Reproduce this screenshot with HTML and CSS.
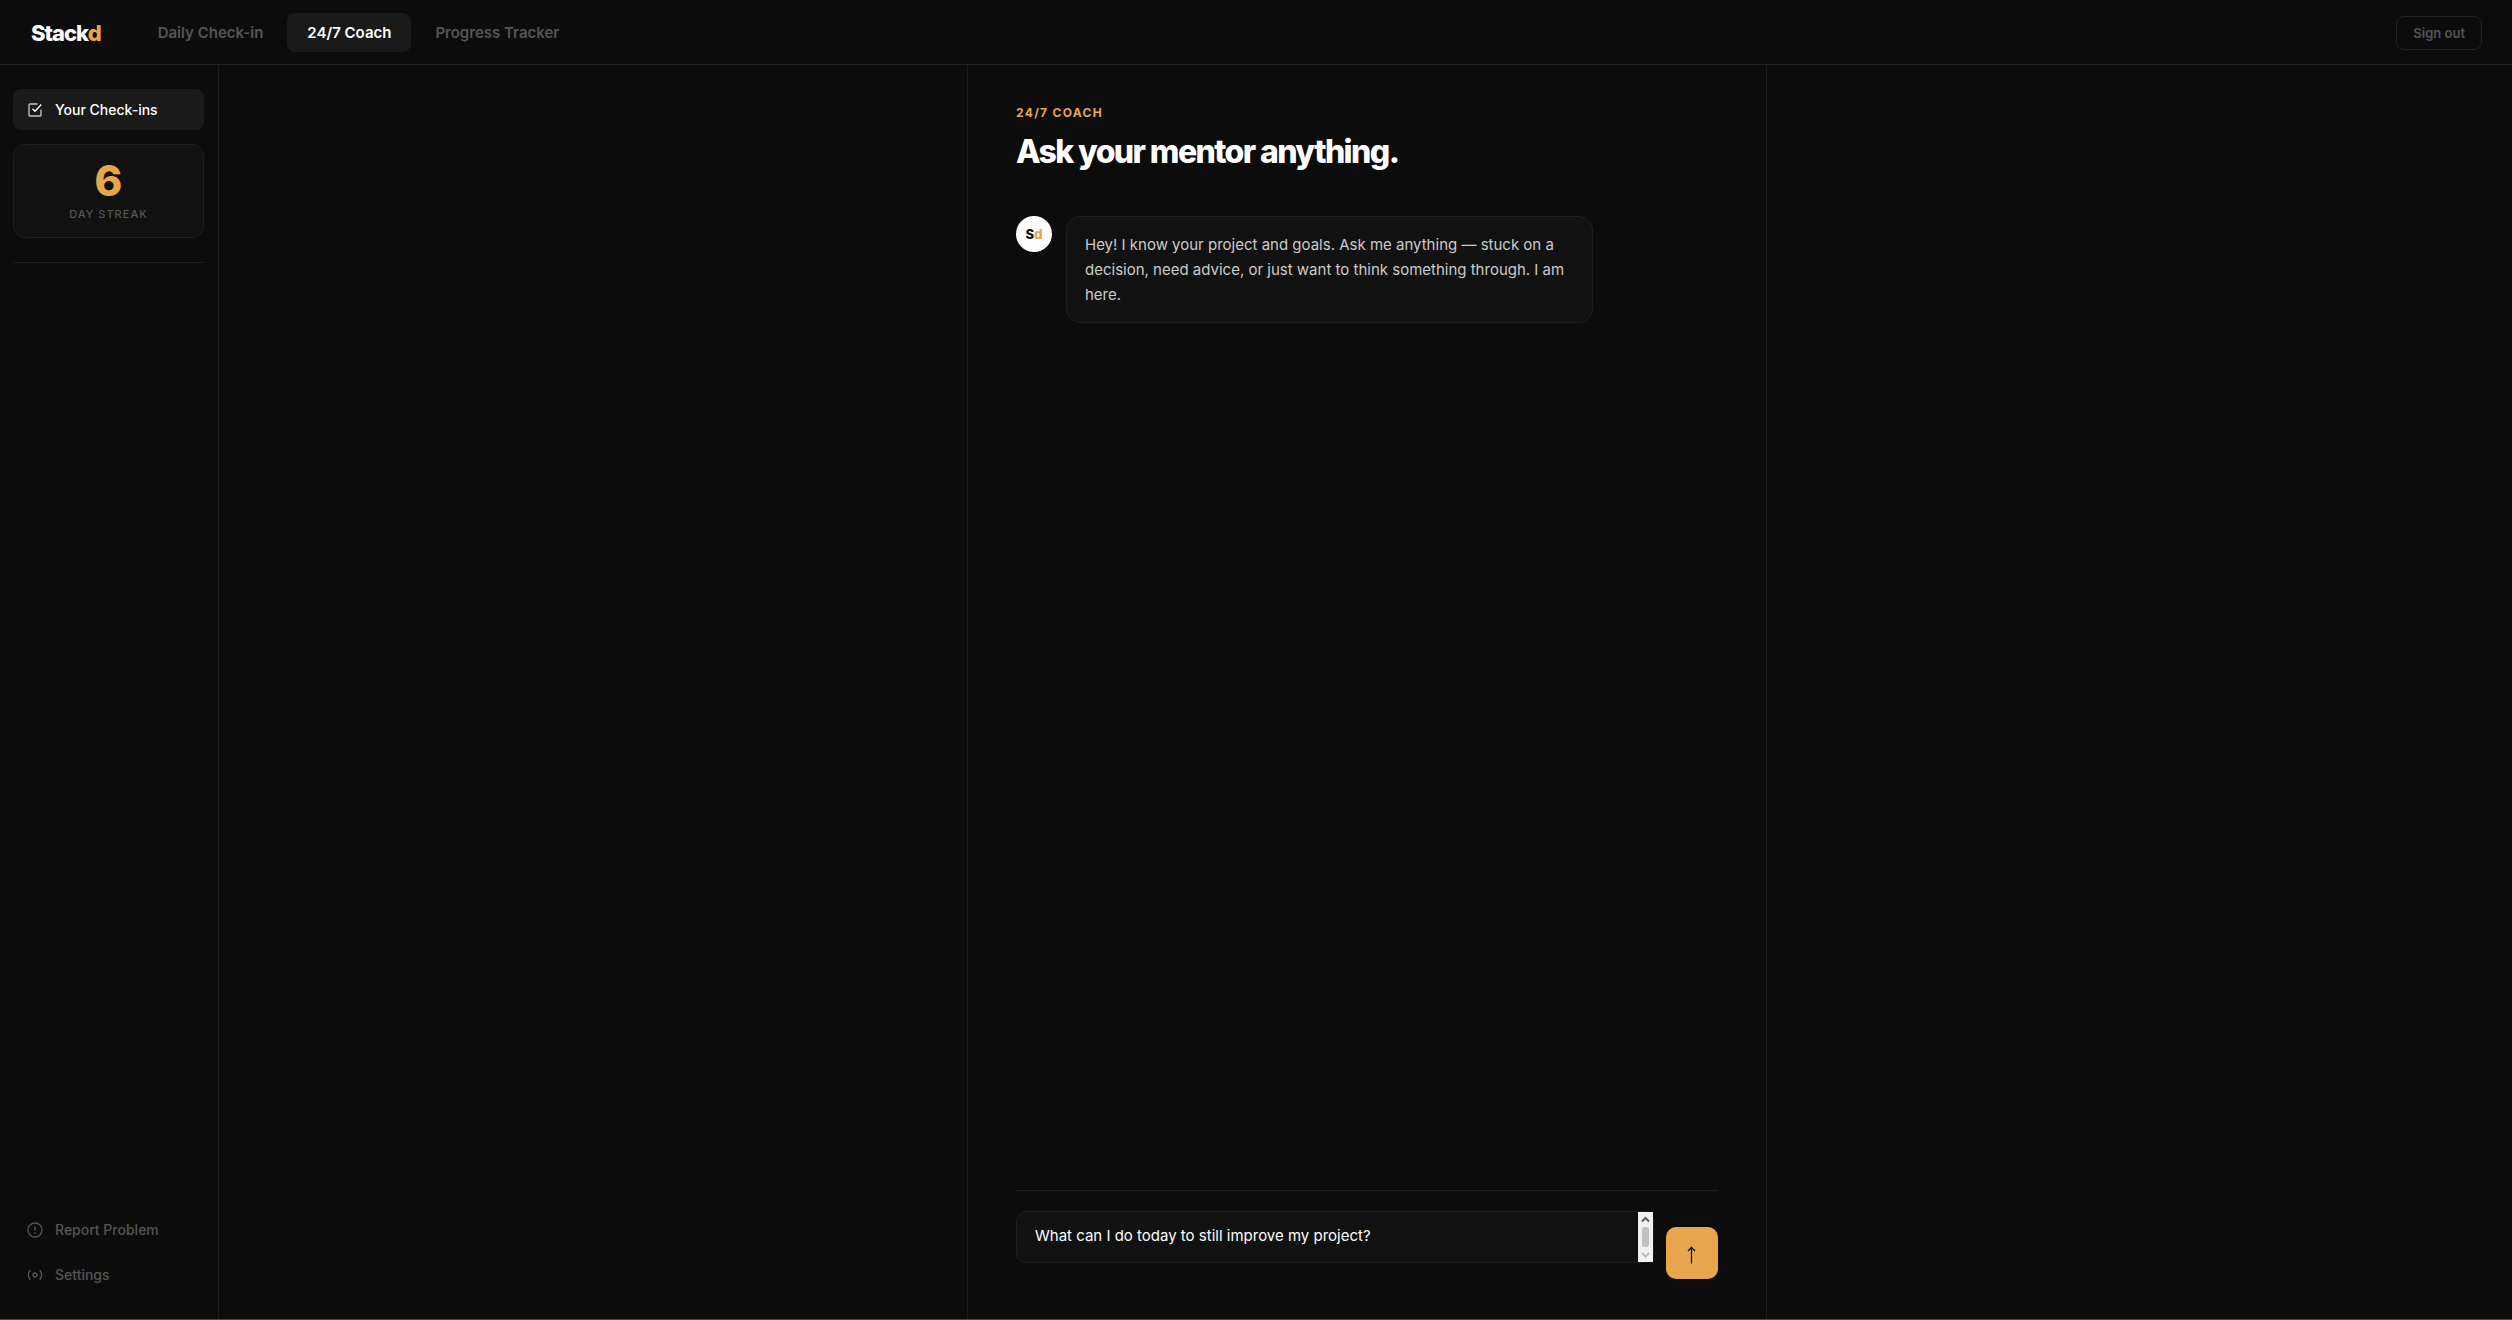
FILE: index.html
```html
<!DOCTYPE html>
<html lang="en">
<head>
    <meta charset="UTF-8">
    <meta name="viewport" content="width=device-width, initial-scale=1.0">
    <title>Stackd - 24/7 Coach</title>
    <link rel="stylesheet" href="styles.css">
</head>
<body>
    <header class="topbar">
        <div class="logo">Stack<span>d</span></div>
        <nav class="tabs">
            <button type="button" class="tab">Daily Check-in</button>
            <button type="button" class="tab active">24/7 Coach</button>
            <button type="button" class="tab">Progress Tracker</button>
        </nav>
        <button type="button" class="signout">Sign out</button>
    </header>

    <div class="layout">
        <aside class="sidebar">
            <button type="button" class="side-item active">
                <svg width="16" height="16" viewBox="0 0 16 16" fill="none" stroke="currentColor" stroke-width="1.300">
                    <path d="M10.500 2H3a1 1 0 0 0-1 1v10a1 1 0 0 0 1 1h10a1 1 0 0 0 1-1V7.500" stroke="#c8c8c8"/>
                    <path d="M5.500 6.700L8 9.200L14.300 2.500"/>
                </svg>
                Your Check-ins
            </button>
            <div class="streak">
                <div class="streak-num">6</div>
                <div class="streak-label">Day streak</div>
            </div>
            <div class="divider"></div>

            <div class="side-bottom">
                <button type="button" class="side-item">
                    <svg width="16" height="16" viewBox="0 0 16 16" fill="none" stroke="currentColor" stroke-width="1.300">
                        <circle cx="8" cy="8" r="7"/>
                        <path d="M8 4.500v4M8 10.300v1.300" stroke-width="1.600"/>
                    </svg>
                    Report Problem
                </button>
                <button type="button" class="side-item">
                    <svg width="16" height="16" viewBox="0 0 24 24" fill="none" stroke="currentColor" stroke-width="2">
                        <circle cx="12" cy="12" r="3"/>
                        <path d="M19.07 4.93a10 10 0 0 1 0 14.14M4.93 4.93a10 10 0 0 0 0 14.14"/>
                    </svg>
                    Settings
                </button>
            </div>
        </aside>

        <main class="main">
            <section class="coach">
                <div class="eyebrow">24/7 Coach</div>
                <h1>Ask your mentor anything.</h1>

                <div class="messages">
                    <div class="message">
                        <div class="avatar">S<span>d</span></div>
                        <div class="bubble">Hey! I know your project and goals. Ask me anything — stuck on a decision, need advice, or just want to think something through. I am here.</div>
                    </div>
                </div>

                <form class="composer">
                    <div class="input-wrap">
                        <textarea class="chat-input" rows="1" aria-label="Message">What can I do today to still improve my project?</textarea>
                        <!-- scrollbar of the message box -->
                        <svg class="scrollbar" width="15" height="50" viewBox="0 0 15 50">
                            <rect width="15" height="50" fill="#f1f1f1"/>
                            <rect x="4" y="15" width="7" height="20" rx="3" fill="#c1c1c1"/>
                            <path d="M4 9.500L7.500 6L11 9.500" fill="none" stroke="#606060" stroke-width="2"/>
                            <path d="M4 41L7.500 44.500L11 41" fill="none" stroke="#bcbcbc" stroke-width="2"/>
                        </svg>
                    </div>
                    <button type="submit" class="send" aria-label="Send">
                        <svg width="20" height="20" viewBox="0 0 20 20" fill="none" stroke="currentColor">
                            <path d="M9.500 20.500V4" stroke-width="1.200"/>
                            <path d="M6 8L9.500 4.500L13 8" stroke-width="1.300"/>
                        </svg>
                    </button>
                </form>
            </section>
        </main>
    </div>
</body>
</html>
```
FILE: styles.css
```css
* {
    box-sizing: border-box;
    margin: 0;
    padding: 0;
}
body {
    min-height: 100vh;
    display: flex;
    flex-direction: column;
    background: #0c0c0c;
    color: #fff;
    font-family: Inter, sans-serif;
    border-bottom: 1px solid #4c4543;
}
button, textarea {
    font-family: inherit;
    border: none;
    background: none;
}
button {
    cursor: pointer;
}

/* top bar */
.topbar {
    display: flex;
    align-items: center;
    height: 65px;
    padding: 1px 30px 0 31px;
    border-bottom: 1px solid #1e1e1e;
}
.logo {
    font-size: 22px;
    font-weight: 800;
    letter-spacing: -1px;
    margin-right: 37px;
}
.logo span, .avatar span {
    color: #e8a54b;
}
.tabs {
    display: flex;
    gap: 4px;
}
.tab {
    padding: 10px 20px;
    border-radius: 8px;
    color: #555;
    font-size: 15px;
    line-height: 19px;
    font-weight: 600;
}
.tab.active {
    background: #1a1a1a;
    color: #fff;
}
.signout {
    margin-left: auto;
    padding: 8px 16px;
    border: 1px solid #222;
    border-radius: 8px;
    color: #555;
    font-size: 13px;
    line-height: 16px;
    font-weight: 600;
}

.layout {
    flex: 1;
    display: flex;
}

/* sidebar */
.sidebar {
    width: 219px;
    display: flex;
    flex-direction: column;
    padding: 24px 14px 24px 13px;
    border-right: 1px solid #1e1e1e;
}
.side-item {
    display: flex;
    align-items: center;
    gap: 12px;
    width: 100%;
    padding: 12px 14px;
    border-radius: 8px;
    color: #555;
    font-size: 14px;
    line-height: 17px;
    font-weight: 500;
    text-align: left;
}
.side-item.active {
    background: #1a1a1a;
    color: #fff;
}
.streak {
    margin-top: 14px;
    padding: 15px;
    background: #111;
    border: 1px solid #1e1e1e;
    border-radius: 12px;
    text-align: center;
}
.streak-num {
    color: #e8a54b;
    font-size: 42px;
    line-height: 42px;
    font-weight: 800;
}
.streak-label {
    margin-top: 5px;
    padding-bottom: 1px;
    color: #555;
    font-size: 11px;
    line-height: 14px;
    font-weight: 500;
    letter-spacing: 1px;
    text-transform: uppercase;
}
.divider {
    margin-top: 24px;
    border-top: 1px solid #1e1e1e;
}
.side-bottom {
    display: flex;
    flex-direction: column;
    gap: 4px;
    margin-top: auto;
}

/* coach */
.main {
    flex: 1;
    display: flex;
    justify-content: center;
    padding-left: 3px;
}
.coach {
    width: 100%;
    max-width: 800px;
    display: flex;
    flex-direction: column;
    padding: 40px 48px;
    border-left: 1px solid #1e1e1e;
    border-right: 1px solid #1e1e1e;
}
.eyebrow {
    color: #e8a54b;
    font-size: 12px;
    line-height: 15px;
    font-weight: 700;
    letter-spacing: 0.11em;
    text-transform: uppercase;
}
h1 {
    margin-top: 12px;
    font-size: 32px;
    line-height: 39px;
    font-weight: 800;
    letter-spacing: -0.05em;
}
.messages {
    flex: 1;
    margin-top: 45px;
}
.message {
    display: flex;
    align-items: flex-start;
    gap: 14px;
}
.avatar {
    width: 36px;
    height: 36px;
    display: flex;
    align-items: center;
    justify-content: center;
    flex-shrink: 0;
    border-radius: 50%;
    background: #fff;
    color: #0c0c0c;
    font-size: 13px;
    font-weight: 800;
}
.bubble {
    max-width: 75%;
    padding: 15px 18px;
    background: #111;
    border: 1px solid #1e1e1e;
    border-radius: 14px;
    color: #ccc;
    font-size: 15px;
    line-height: 25px;
}
.composer {
    display: flex;
    align-items: flex-end;
    gap: 12px;
    padding-top: 20px;
    border-top: 1px solid #1e1e1e;
}
.input-wrap {
    position: relative;
    flex: 1;
    padding-bottom: 16px;
}
.chat-input {
    display: block;
    width: 100%;
    height: 52px;
    padding: 13px 33px 13px 18px;
    background: #111;
    border: 1px solid #1e1e1e;
    border-radius: 10px;
    color: #fff;
    font-size: 15px;
    line-height: 22px;
    resize: none;
    overflow: hidden;
    outline: none;
}
.scrollbar {
    position: absolute;
    top: 1px;
    right: 1px;
}
.send {
    width: 52px;
    height: 52px;
    display: flex;
    align-items: center;
    justify-content: center;
    flex-shrink: 0;
    border-radius: 10px;
    background: #e8a54b;
    color: #0c0c0c;
}
.send svg {
    overflow: visible;
}
```
